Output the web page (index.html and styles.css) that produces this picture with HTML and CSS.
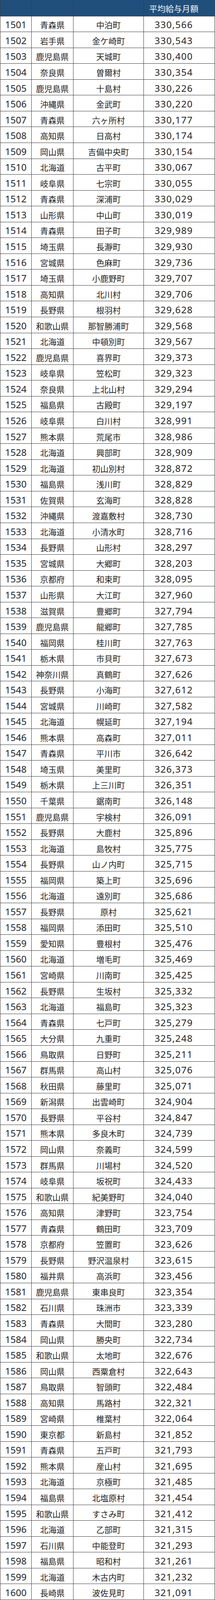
FILE: index.html
```html
<!DOCTYPE html>
<html lang="ja">
<head>
<meta charset="utf-8">
<title>平均給与月額</title>
<link rel="stylesheet" href="styles.css">
</head>
<body>
<div class="table" id="t">
  <div class="th"></div><div class="th"></div><div class="th"></div><div class="th amt">平均給与月額</div>
</div>
<script src="app.js"></script>
</body>
</html>
```

FILE: app.js
```js
var data = [
["1501","青森県","中泊町","330,566"],
["1502","岩手県","金ケ崎町","330,543"],
["1503","鹿児島県","天城町","330,400"],
["1504","奈良県","曽爾村","330,354"],
["1505","鹿児島県","十島村","330,226"],
["1506","沖縄県","金武町","330,220"],
["1507","青森県","六ヶ所村","330,177"],
["1508","高知県","日高村","330,174"],
["1509","岡山県","吉備中央町","330,154"],
["1510","北海道","古平町","330,067"],
["1511","岐阜県","七宗町","330,055"],
["1512","青森県","深浦町","330,029"],
["1513","山形県","中山町","330,019"],
["1514","青森県","田子町","329,989"],
["1515","埼玉県","長瀞町","329,930"],
["1516","宮城県","色麻町","329,736"],
["1517","埼玉県","小鹿野町","329,707"],
["1518","高知県","北川村","329,706"],
["1519","長野県","根羽村","329,628"],
["1520","和歌山県","那智勝浦町","329,568"],
["1521","北海道","中頓別町","329,567"],
["1522","鹿児島県","喜界町","329,373"],
["1523","岐阜県","笠松町","329,323"],
["1524","奈良県","上北山村","329,294"],
["1525","福島県","古殿町","329,197"],
["1526","岐阜県","白川村","328,991"],
["1527","熊本県","荒尾市","328,986"],
["1528","北海道","興部町","328,909"],
["1529","北海道","初山別村","328,872"],
["1530","福島県","浅川町","328,829"],
["1531","佐賀県","玄海町","328,828"],
["1532","沖縄県","渡嘉敷村","328,730"],
["1533","北海道","小清水町","328,716"],
["1534","長野県","山形村","328,297"],
["1535","宮城県","大郷町","328,203"],
["1536","京都府","和束町","328,095"],
["1537","山形県","大江町","327,960"],
["1538","滋賀県","豊郷町","327,794"],
["1539","鹿児島県","龍郷町","327,785"],
["1540","福岡県","桂川町","327,763"],
["1541","栃木県","市貝町","327,673"],
["1542","神奈川県","真鶴町","327,626"],
["1543","長野県","小海町","327,612"],
["1544","宮城県","川崎町","327,582"],
["1545","北海道","幌延町","327,194"],
["1546","熊本県","高森町","327,011"],
["1547","青森県","平川市","326,642"],
["1548","埼玉県","美里町","326,373"],
["1549","栃木県","上三川町","326,351"],
["1550","千葉県","鋸南町","326,148"],
["1551","鹿児島県","宇検村","326,091"],
["1552","長野県","大鹿村","325,896"],
["1553","北海道","島牧村","325,775"],
["1554","長野県","山ノ内町","325,715"],
["1555","福岡県","築上町","325,696"],
["1556","北海道","遠別町","325,686"],
["1557","長野県","原村","325,621"],
["1558","福岡県","添田町","325,510"],
["1559","愛知県","豊根村","325,476"],
["1560","北海道","増毛町","325,469"],
["1561","宮崎県","川南町","325,425"],
["1562","長野県","生坂村","325,332"],
["1563","北海道","福島町","325,323"],
["1564","青森県","七戸町","325,279"],
["1565","大分県","九重町","325,248"],
["1566","鳥取県","日野町","325,211"],
["1567","群馬県","高山村","325,076"],
["1568","秋田県","藤里町","325,071"],
["1569","新潟県","出雲崎町","324,904"],
["1570","長野県","平谷村","324,847"],
["1571","熊本県","多良木町","324,739"],
["1572","岡山県","奈義町","324,599"],
["1573","群馬県","川場村","324,520"],
["1574","岐阜県","坂祝町","324,433"],
["1575","和歌山県","紀美野町","324,040"],
["1576","高知県","津野町","323,754"],
["1577","青森県","鶴田町","323,709"],
["1578","京都府","笠置町","323,626"],
["1579","長野県","野沢温泉村","323,615"],
["1580","福井県","高浜町","323,456"],
["1581","鹿児島県","東串良町","323,354"],
["1582","石川県","珠洲市","323,339"],
["1583","青森県","大間町","323,280"],
["1584","岡山県","勝央町","322,734"],
["1585","和歌山県","太地町","322,676"],
["1586","岡山県","西粟倉村","322,643"],
["1587","鳥取県","智頭町","322,484"],
["1588","高知県","馬路村","322,321"],
["1589","宮崎県","椎葉村","322,064"],
["1590","東京都","新島村","321,852"],
["1591","青森県","五戸町","321,793"],
["1592","熊本県","産山村","321,695"],
["1593","北海道","京極町","321,485"],
["1594","福島県","北塩原村","321,454"],
["1595","和歌山県","すさみ町","321,412"],
["1596","北海道","乙部町","321,315"],
["1597","石川県","中能登町","321,293"],
["1598","福島県","昭和村","321,261"],
["1599","北海道","木古内町","321,232"],
["1600","長崎県","波佐見町","321,091"]
];
var t = document.getElementById("t");
var cls = ["td rank", "td pref", "td city", "td amt"];
var html = "";
for (var i = 0; i < data.length; i++) {
  for (var j = 0; j < 4; j++) {
    html += '<div class="' + cls[j] + '">' + data[i][j] + '</div>';
  }
}
t.insertAdjacentHTML("beforeend", html);
```

FILE: styles.css
```css
html, body {
  margin: 0;
  padding: 0;
  background: #ffffff;
  height: 100%;
}
.table {
  box-sizing: border-box;
  width: 100%;
  height: 100vh;
  display: grid;
  grid-template-columns: 79px 106px 179px minmax(0, 1fr);
  grid-template-rows: minmax(0, 48fr) repeat(100, minmax(0, 46.72fr));
  gap: 1px;
  padding: 0 1px 1px 1px;
  background: #3a3a3a;
  font-family: "Noto Sans CJK JP", sans-serif;
  color: #252525;
  overflow: hidden;
}
.th, .td {
  display: flex;
  align-items: center;
  justify-content: center;
  padding-top: 4px;
  box-sizing: border-box;
  white-space: nowrap;
  overflow: hidden;
  min-height: 0;
  line-height: 28px;
}
.th {
  background: #214f7c;
  color: #f2f4f7;
  font-size: 21px;
  padding-top: 2px;
}
.td {
  background: #ffffff;
  font-size: 21px;
}
.rank {
  font-family: "Noto Sans", sans-serif;
  font-size: 24px;
}
.td.amt {
  font-family: "Noto Sans", sans-serif;
  font-size: 24px;
  letter-spacing: 1.3px;
}
.amt {
  padding-right: 28px;
}
```
